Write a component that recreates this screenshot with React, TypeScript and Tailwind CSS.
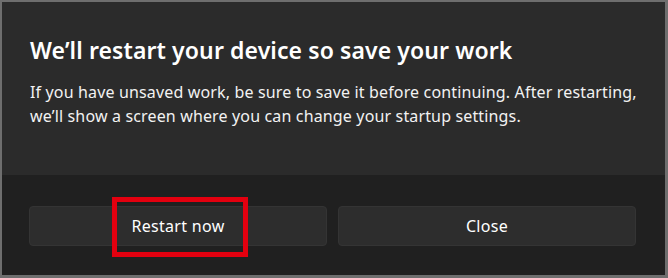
import React from "react";

export default function App() {
  return (
    <div
      className="relative w-[668px] h-[278px] overflow-hidden border-l-2 border-t-2 border-r-[3px] border-b-[3px] border-[#6e6e6e] flex flex-col"
      style={{ fontFamily: '"Noto Sans", "Open Sans", sans-serif' }}
    >
      <div className="h-[173px] bg-[#2b2b2b] pl-[28px] pt-[34px] text-white">
        <h1 className="text-[23px] leading-[28px] font-semibold tracking-[0.1px] whitespace-nowrap">
          We’ll restart your device so save your work
        </h1>
        <p className="mt-[17px] text-[16px] leading-[23.5px] text-[#f2f2f2] tracking-[0.15px] whitespace-nowrap">
          If you have unsaved work, be sure to save it before continuing. After restarting,
          <br />
          we’ll show a screen where you can change your startup settings.
        </p>
      </div>
      <div className="flex-1 bg-[#202020] pl-[27px] pr-[29px] pt-[31px] flex gap-[11px]">
        <button className="w-[298px] h-[40px] rounded-[4px] bg-[#2d2d2d] border border-[#343434] text-[16px] tracking-[0.3px] text-white">
          Restart now
        </button>
        <button className="w-[298px] h-[40px] rounded-[4px] bg-[#2d2d2d] border border-[#343434] text-[16px] tracking-[0.3px] text-white">
          Close
        </button>
      </div>
      <div className="absolute left-[110px] top-[195px] w-[136px] h-[60px] border-[5px] border-[#e3000f]" />
    </div>
  );
}
